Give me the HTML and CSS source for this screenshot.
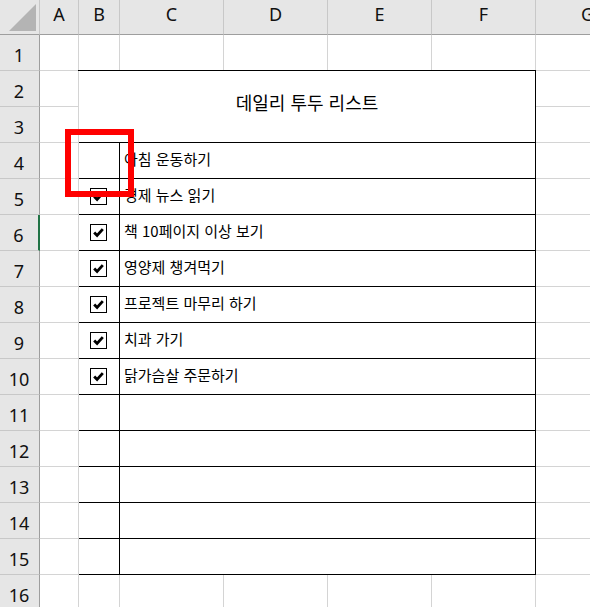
FILE: index.html
```html
<!DOCTYPE html>
<html lang="ko">
<head>
    <meta charset="UTF-8">
    <meta name="viewport" content="width=device-width, initial-scale=1.0">
    <title>데일리 투두 리스트</title>
    <link rel="stylesheet" href="styles.css">
</head>
<body>
    <div class="sheet">
        <div class="corner"><span class="corner-mark"></span></div>
        <div class="col-head">A</div>
        <div class="col-head">B</div>
        <div class="col-head">C</div>
        <div class="col-head">D</div>
        <div class="col-head">E</div>
        <div class="col-head">F</div>
        <div class="col-head">G</div>

        <!-- 1행 -->
        <div class="row-head">1</div>
        <div class="cell"></div><div class="cell"></div><div class="cell"></div><div class="cell"></div>
        <div class="cell"></div><div class="cell"></div><div class="cell"></div>

        <!-- 투두 표 (B2:F15) -->
        <div class="todo">
            <div class="todo-title">데일리 투두 리스트</div>
            <div class="task">
                <div class="task-check"></div>
                <div class="task-text">아침 운동하기</div>
            </div>
            <div class="task">
                <div class="task-check"><span class="box"><svg viewBox="0 0 16 16"><polyline points="3.4,8 6.5,11.2 12.6,4.4"/></svg></span></div>
                <div class="task-text">경제 뉴스 읽기</div>
            </div>
            <div class="task">
                <div class="task-check"><span class="box"><svg viewBox="0 0 16 16"><polyline points="3.4,8 6.5,11.2 12.6,4.4"/></svg></span></div>
                <div class="task-text">책 10페이지 이상 보기</div>
            </div>
            <div class="task">
                <div class="task-check"><span class="box"><svg viewBox="0 0 16 16"><polyline points="3.4,8 6.5,11.2 12.6,4.4"/></svg></span></div>
                <div class="task-text">영양제 챙겨먹기</div>
            </div>
            <div class="task">
                <div class="task-check"><span class="box"><svg viewBox="0 0 16 16"><polyline points="3.4,8 6.5,11.2 12.6,4.4"/></svg></span></div>
                <div class="task-text">프로젝트 마무리 하기</div>
            </div>
            <div class="task">
                <div class="task-check"><span class="box"><svg viewBox="0 0 16 16"><polyline points="3.4,8 6.5,11.2 12.6,4.4"/></svg></span></div>
                <div class="task-text">치과 가기</div>
            </div>
            <div class="task">
                <div class="task-check"><span class="box"><svg viewBox="0 0 16 16"><polyline points="3.4,8 6.5,11.2 12.6,4.4"/></svg></span></div>
                <div class="task-text">닭가슴살 주문하기</div>
            </div>
            <div class="task"><div class="task-check"></div><div class="task-text"></div></div>
            <div class="task"><div class="task-check"></div><div class="task-text"></div></div>
            <div class="task"><div class="task-check"></div><div class="task-text"></div></div>
            <div class="task"><div class="task-check"></div><div class="task-text"></div></div>
            <div class="task"><div class="task-check"></div><div class="task-text"></div></div>
        </div>

        <!-- 2~15행: A열, G열 -->
        <div class="row-head">2</div><div class="cell"></div><div class="cell"></div>
        <div class="row-head">3</div><div class="cell"></div><div class="cell"></div>
        <div class="row-head">4</div><div class="cell"></div><div class="cell"></div>
        <div class="row-head">5</div><div class="cell"></div><div class="cell"></div>
        <div class="row-head active">6</div><div class="cell"></div><div class="cell"></div>
        <div class="row-head">7</div><div class="cell"></div><div class="cell"></div>
        <div class="row-head">8</div><div class="cell"></div><div class="cell"></div>
        <div class="row-head">9</div><div class="cell"></div><div class="cell"></div>
        <div class="row-head">10</div><div class="cell"></div><div class="cell"></div>
        <div class="row-head">11</div><div class="cell"></div><div class="cell"></div>
        <div class="row-head">12</div><div class="cell"></div><div class="cell"></div>
        <div class="row-head">13</div><div class="cell"></div><div class="cell"></div>
        <div class="row-head">14</div><div class="cell"></div><div class="cell"></div>
        <div class="row-head">15</div><div class="cell"></div><div class="cell"></div>

        <!-- 16행 -->
        <div class="row-head">16</div>
        <div class="cell"></div><div class="cell"></div><div class="cell"></div><div class="cell"></div>
        <div class="cell"></div><div class="cell"></div><div class="cell"></div>

        <!-- 빠진 체크박스 강조 -->
        <div class="highlight"></div>
    </div>
</body>
</html>
```

FILE: styles.css
```css
* {
    box-sizing: border-box;
}
html, body {
    margin: 0;
    padding: 0;
    background: #fff;
    overflow: hidden;
}
.sheet {
    position: relative;
    display: grid;
    grid-template-columns: 40px 39px 41px 104px 104px 104px 104px 104px;
    grid-template-rows: 35px repeat(16, 36px);
    font-family: "Noto Sans CJK KR", "Noto Sans", sans-serif;
    color: #000;
}
.corner {
    background: #e6e6e6;
    border-right: 1px solid #c8c8c8;
    border-bottom: 1px solid #9e9e9e;
    position: relative;
}
.corner-mark {
    position: absolute;
    left: 9px;
    top: 4px;
    width: 27px;
    height: 27px;
    background: #b4b4b4;
    clip-path: polygon(100% 0, 100% 100%, 0 100%);
}
.col-head {
    background: #e6e6e6;
    border-right: 1px solid #c8c8c8;
    border-bottom: 1px solid #9e9e9e;
    display: flex;
    justify-content: center;
    align-items: center;
    padding-bottom: 6px;
    font-family: "Noto Sans", sans-serif;
    font-size: 18px;
    color: #111;
}
.row-head {
    grid-column: 1;
    background: #e6e6e6;
    border-right: 1px solid #9e9e9e;
    border-bottom: 1px solid #c8c8c8;
    display: flex;
    justify-content: center;
    align-items: center;
    padding-top: 4px;
    padding-right: 1px;
    font-family: "Noto Sans", sans-serif;
    font-size: 18px;
    color: #111;
}
.row-head.active {
    border-right: 2px solid #217346;
}
.cell {
    border-right: 1px solid #d4d4d4;
    border-bottom: 1px solid #d4d4d4;
}
.todo {
    grid-column: 3 / 8;
    grid-row: 3 / 17;
    margin: -1px 0 0 -1px;
    border: 1px solid #000;
    border-bottom: 0;
    background: #fff;
    display: flex;
    flex-direction: column;
}
.todo-title {
    height: 72px;
    flex: none;
    border-bottom: 1px solid #000;
    display: flex;
    justify-content: center;
    align-items: center;
    padding-bottom: 10px;
    font-size: 18px;
}
.task {
    height: 36px;
    flex: none;
    display: flex;
    border-bottom: 1px solid #000;
}
.task-check {
    width: 41px;
    flex: none;
    border-right: 1px solid #000;
    display: flex;
    justify-content: center;
    align-items: center;
    padding-right: 1px;
}
.box {
    width: 17px;
    height: 17px;
    border: 1px solid #000;
    display: flex;
}
.box svg {
    width: 100%;
    height: 100%;
    fill: none;
    stroke: #000;
    stroke-width: 3;
}
.task-text {
    flex: 1;
    display: flex;
    align-items: center;
    padding-left: 4px;
    padding-bottom: 4px;
    font-size: 15px;
}
.highlight {
    position: absolute;
    left: 65px;
    top: 129px;
    width: 69px;
    height: 68px;
    border: 6px solid #f00;
}
```
